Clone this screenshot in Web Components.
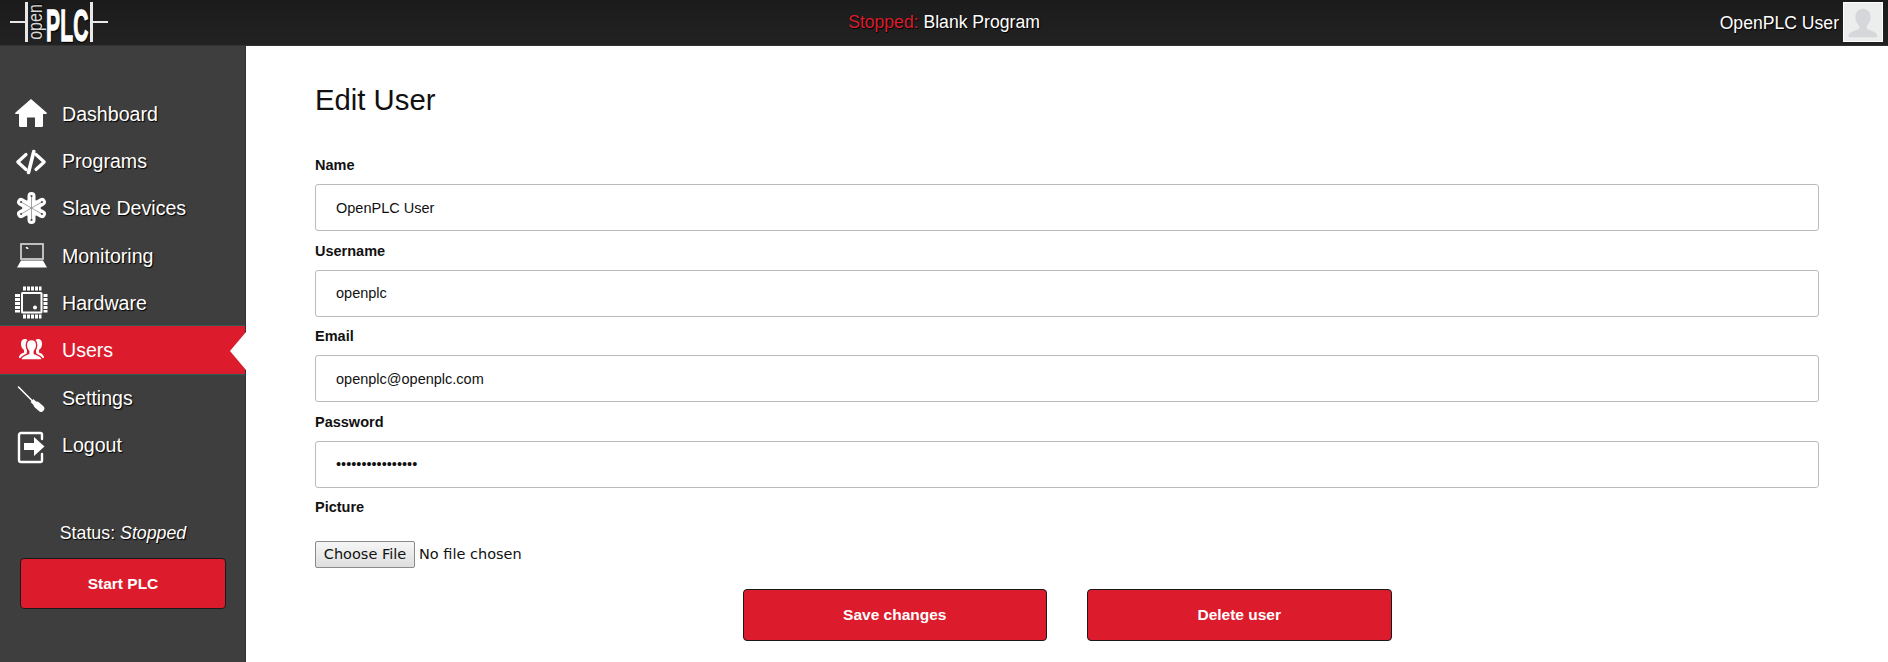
<!DOCTYPE html>
<html lang="en"><head><meta charset="utf-8"><title>Edit User</title>
<style>
html,body{margin:0;padding:0;height:662px;overflow:hidden;background:#fff;font-family:"Liberation Sans",Arial,sans-serif}
</style></head><body>
<plc-app>
  <plc-topbar slot="top" state="Stopped:" program="Blank Program" user="OpenPLC User"></plc-topbar>
  <plc-sidebar slot="side">
    <nav-item icon="home">Dashboard</nav-item>
    <nav-item icon="code">Programs</nav-item>
    <nav-item icon="atom">Slave Devices</nav-item>
    <nav-item icon="laptop">Monitoring</nav-item>
    <nav-item icon="chip">Hardware</nav-item>
    <nav-item icon="users" active>Users</nav-item>
    <nav-item icon="driver">Settings</nav-item>
    <nav-item icon="logout">Logout</nav-item>
  </plc-sidebar>
  <edit-form slot="main"></edit-form>
</plc-app>
<script>
const def=(name,html,extra={})=>{
  const t=document.createElement('template');t.innerHTML=html;
  customElements.define(name,class extends HTMLElement{
    constructor(){super();this.attachShadow({mode:'open'}).appendChild(t.content.cloneNode(true));}
    connectedCallback(){extra.init&&extra.init(this)}
  });
};
def('plc-app',`<style>
:host{display:grid;grid-template-columns:246px 1fr;grid-template-rows:46px 616px;height:662px;width:1888px}
::slotted([slot=top]){grid-column:1/3}
</style><slot name="top"></slot><slot name="side"></slot><slot name="main"></slot>`);
def('plc-logo',`<style>
:host{display:flex;align-items:center;height:46px;width:110px;padding-left:10px;color:#fff}
.rule{height:2px;background:#e8e8e8;margin-top:-2px}.l{width:15px}.r{width:15px}
.bar{width:3px;height:40px;background:#e8e8e8;margin-top:-2px}
.open{width:16px;height:40px;display:flex;align-items:center;justify-content:center;margin-top:-2px}
.open span{display:block;transform:rotate(-90deg) scale(1,1.25);font-size:16px;color:#d8d8d8;white-space:nowrap;line-height:1}
.plc{width:46px;height:40px;display:flex;align-items:center;justify-content:center;margin-top:-2px}
.plc span{display:block;font:bold 24px/.7 "Liberation Sans",sans-serif;transform:translateY(4px) scale(.875,1.88);white-space:nowrap;-webkit-text-stroke:.7px #fff;letter-spacing:.2px}
</style><div class="rule l"></div><div class="bar"></div><div class="open"><span>open</span></div><div class="plc"><span>PLC</span></div><div class="bar"></div><div class="rule r"></div>`);
def('plc-topbar',`<style>
:host{display:grid;grid-template-columns:1fr auto 1fr;align-items:center;height:46px;box-sizing:border-box;background:linear-gradient(#1b1b1b,#222);border-bottom:1px solid #333;color:#fff;font-size:17.6px;text-shadow:1px 1px 1px #000}
.c{margin-top:-1px}
.c b{font-weight:normal;color:#dc1c2c}
.u{justify-self:end;display:flex;align-items:center;gap:4px;padding-right:5px}
.av{width:40px;height:40px;box-sizing:border-box;border:1px solid #fff;background:#eceded;display:block;margin-top:-2px}
</style><plc-logo></plc-logo><div class="c"><b id="s"></b> <span id="p"></span></div>
<div class="u"><span id="n"></span><svg class="av" viewBox="0 0 40 40"><path fill="#d5d7da" d="M20 6c5 0 8 4 8 9 0 4-2 7-4 9v3c4 2 10 3 11 7v2H5v-2c1-4 7-5 11-7v-3c-2-2-4-5-4-9 0-5 3-9 8-9z"/></svg></div>`,{init(h){const r=h.shadowRoot;r.getElementById('s').textContent=h.getAttribute('state');r.getElementById('p').textContent=h.getAttribute('program');r.getElementById('n').textContent=h.getAttribute('user');}});
def('plc-sidebar',`<style>
:host{display:flex;flex-direction:column;box-sizing:border-box;height:616px;background:#3e3e3e;border-right:1px solid #333;color:#fff;padding-top:44.5px;font-size:19.6px}
nav{display:block}
.st{margin-top:53.500px;text-align:center;font-size:17.800px;line-height:20px;text-shadow:1px 1px 1px #000;padding-left:1px}
.bw{padding:15px 19px 0 20px}
</style><nav><slot></slot></nav><div class="st">Status: <i>Stopped</i></div><div class="bw"><red-button h="51">Start PLC</red-button></div>`);
const ICONS={
home:`<path fill="#fff" d="M17 3 1.5 16.5c-.8.8-.2 1.5.6 1.5H5v11.500c0 .8.5 1.500 1.300 1.500H13V21.500h8V31h6.700c.8 0 1.300-.7 1.300-1.500V18h2.900c.8 0 1.400-.7.600-1.500z"/>`,
code:`<g fill="none" stroke="#fff" stroke-width="3.200" stroke-linecap="round" stroke-linejoin="round"><path d="M12 10.500 3.800 18l8.200 7.500M22 10.500 30.200 18 22 25.500"/><path d="M19.800 7.500 14.500 28.500" stroke-width="3.600"/></g>`,
atom:`<g stroke="#fff" stroke-width="8" stroke-linecap="round"><path d="M17.500 5V29M7.100 11 27.900 23M7.100 23 27.900 11"/></g><path fill="#fff" d="M17.500 7 26.600 12.300V21.700L17.500 27 8.400 21.700V12.300z"/><g stroke="#8c8c8c" stroke-width=".8"><path d="M17.500 5V29M7.100 11 27.900 23M7.100 23 27.900 11"/></g><g fill="#4a4a4a"><circle cx="17.500" cy="5" r="1.100"/><circle cx="17.500" cy="29" r="1.100"/><circle cx="7.100" cy="11" r="1.100"/><circle cx="27.900" cy="23" r="1.100"/><circle cx="7.100" cy="23" r="1.100"/><circle cx="27.900" cy="11" r="1.100"/></g>`,
laptop:`<rect x="7" y="6" width="22" height="15" fill="none" stroke="#ccc" stroke-width="1.800"/><path fill="#fff" d="M7 22.500h22l4 7H3z"/><path fill="#fff" d="M11.500 9h2l1.200 2h-2z"/>`,
chip:`<rect x="8" y="7" width="19.500" height="19.500" rx=".5" fill="none" stroke="#fff" stroke-width="2"/><circle cx="21" cy="21.500" r="2" fill="#fff"/><g fill="#fff"><rect x="9" y=".5" width="3" height="4"/><rect x="13" y=".5" width="3" height="4"/><rect x="17" y=".5" width="3" height="4"/><rect x="21" y=".5" width="3" height="4"/><rect x="25" y=".5" width="2.500" height="4"/><rect x="9" y="28.500" width="3" height="4"/><rect x="13" y="28.500" width="3" height="4"/><rect x="17" y="28.500" width="3" height="4"/><rect x="21" y="28.500" width="3" height="4"/><rect x="25" y="28.500" width="2.500" height="4"/><rect x="1" y="8" width="5" height="3"/><rect x="1" y="12" width="5" height="3"/><rect x="1" y="16" width="5" height="3"/><rect x="1" y="20" width="5" height="3"/><rect x="1" y="24" width="5" height="2.500"/><rect x="29.500" y="8" width="4" height="3"/><rect x="29.500" y="12" width="4" height="3"/><rect x="29.500" y="16" width="4" height="3"/><rect x="29.500" y="20" width="4" height="3"/><rect x="29.500" y="24" width="4" height="2.500"/></g>`,
users:`<g fill="#fff"><path d="M10.500 7c3 0 4.500 2.300 4.500 5 0 2.200-.8 4-2 5v2.500L12 26H5c.2-3.500 2.500-4.500 5-5.500v-2.500C8 16.500 7 14.500 7 12c0-2.800 1-5 3.500-5zM24.500 7c-3 0-4.500 2.300-4.500 5 0 2.200.8 4 2 5v2.500l1 6.500h7c-.2-3.500-2.500-4.500-5-5.500V18c2-1.500 3-3.500 3-6 0-2.800-1-5-3.500-5z"/><path d="M17.500 7.500c3.200 0 5.200 2.400 5.200 5.800 0 2.700-1 4.700-2.400 5.900v2.400c3.500 1.400 7.400 2.100 7.700 5.400v1H7v-1c.3-3.300 4.200-4 7.700-5.400v-2.400c-1.400-1.200-2.400-3.200-2.400-5.900 0-3.400 2-5.800 5.200-5.800z" stroke="#dc1c2c" stroke-width="1.400"/></g>`,
driver:`<path stroke="#fff" stroke-width="1.600" stroke-linecap="round" d="M4.500 6 19 20.500"/><path stroke="#fff" stroke-width="4" d="M18 19.500 22 23.500"/><path stroke="#fff" stroke-width="6.500" stroke-linecap="round" d="M23 24 27 27.500"/>`,
logout:`<path fill="none" stroke="#fff" stroke-width="2.400" stroke-linecap="round" stroke-linejoin="round" d="M28 11V6.500c0-1-.8-1.500-1.500-1.500H7c-1 0-2 .8-2 2V32c0 1 1 2 2 2h19.500c.8 0 1.500-.6 1.500-1.500V26"/><path fill="#fff" d="M10 15h10V9l10.500 9.500L20 28v-6H10z"/>`
};
def('nav-item',`<style>
:host{display:flex;align-items:center;box-sizing:border-box;height:47.4px;position:relative;text-shadow:1px 1px 1px #000}
:host([active]){padding-bottom:2px;background:#dc1c2c;box-shadow:0 -1px 0 #dc1c2c,0 -2px 0 #2f5a55,inset 0 -1px 0 #2f5a55;text-shadow:none}
:host([active])::after{content:"";position:absolute;right:-1px;top:50%;margin-top:-19px;border-style:solid;border-width:19px 16px 19px 0;border-color:transparent #fff transparent transparent}
svg{width:36px;height:36px;margin-left:14px;margin-right:12px;flex:none;overflow:visible}
</style><svg viewBox="0 0 36 36" id="i"></svg><slot></slot>`,{init(h){h.shadowRoot.getElementById('i').innerHTML=ICONS[h.getAttribute('icon')]}});
def('red-button',`<style>
:host{display:flex;align-items:center;justify-content:center;box-sizing:border-box;background:#dc1c2c;border:1px solid #1a1a1a;border-radius:4px;color:#fff;font:bold 15.500px "Liberation Sans",sans-serif;text-shadow:none}
</style><slot></slot>`,{init(h){h.style.height=h.getAttribute('h')+'px'}});
def('form-field',`<style>
:host{display:block;font-size:14.500px;color:#111}
.l{display:block;font-weight:bold;height:21px;line-height:21px;margin-bottom:8px}
.i{box-sizing:border-box;height:47px;border:1px solid #bbb;border-radius:3px;padding:0 20px;display:flex;align-items:center;color:#111;background:#fff}
</style><div class="l" id="l"></div><div class="i"><slot></slot></div>`,{init(h){h.shadowRoot.getElementById('l').textContent=h.getAttribute('label')}});
def('file-picker',`<style>
:host{display:flex;align-items:center;gap:4px;font:14.500px "DejaVu Sans",sans-serif;color:#111}
.b{box-sizing:border-box;width:100px;height:27px;border:1px solid #8a8a8a;border-radius:2px;background:linear-gradient(#f6f6f6,#dedede);display:flex;align-items:center;justify-content:center}
</style><div class="b">Choose File</div><div>No file chosen</div>`);
def('edit-form',`<style>
:host{display:block;padding:0 69px;background:#fff;color:#111}
h1{margin:0;padding-top:37px;height:51px;font-weight:normal;font-size:29.300px;line-height:34px;color:#111}
.f{display:grid;row-gap:9.500px;padding-top:21px}
.p{font-weight:bold;font-size:14.500px;height:21px;line-height:21px;margin-top:9.500px}
file-picker{margin-top:22.500px}
.a{display:flex;justify-content:center;gap:40px;margin-top:21.500px}
red-button{width:304.500px}
</style><h1>Edit User</h1>
<div class="f"><form-field label="Name">OpenPLC User</form-field><form-field label="Username">openplc</form-field><form-field label="Email">openplc@openplc.com</form-field><form-field label="Password">••••••••••••••••</form-field></div>
<div class="p">Picture</div><file-picker></file-picker>
<div class="a"><red-button h="52">Save changes</red-button><red-button h="52">Delete user</red-button></div>`);
</script>
</body></html>
